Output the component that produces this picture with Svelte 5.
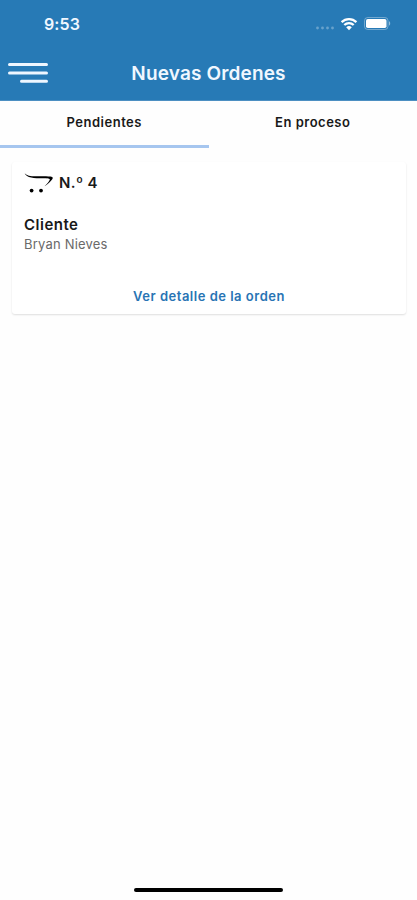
<script>
  let active = 0;

  const tabs = ['Pendientes', 'En proceso'];
  const orders = [{ number: 4, client: 'Bryan Nieves' }];
</script>

<div class="screen">
  <header>
    <div class="status">
      <span class="time">9:53</span>
      <div class="indicators">
        <svg class="signal" width="20" height="4" viewBox="0 0 20 4">
          <circle cx="2.5" cy="2" r="1.4" />
          <circle cx="7.5" cy="2" r="1.4" />
          <circle cx="12.5" cy="2" r="1.4" />
          <circle cx="17.5" cy="2" r="1.4" />
        </svg>
        <svg class="wifi" width="18" height="14" viewBox="0 0 18 14">
          <path d="M1.6 5.1a10.6 10.6 0 0 1 14.8 0" />
          <path d="M4.3 8a6.8 6.8 0 0 1 9.4 0" />
          <path class="dot" d="M9 13.2 6.2 10.3a4 4 0 0 1 5.6 0Z" />
        </svg>
        <svg class="battery" width="27" height="13" viewBox="0 0 27 13">
          <rect class="shell" x="0.5" y="0.5" width="23.5" height="12" rx="3.2" />
          <rect x="2" y="2" width="20.5" height="9" rx="1.8" />
          <path class="cap" d="M25 4.3c1.6.6 1.6 3.8 0 4.4Z" />
        </svg>
      </div>
    </div>
    <div class="bar">
      <button class="menu" aria-label="Menú">
        <svg width="40" height="22" viewBox="0 0 40 22">
          <path d="M1.500 2.500h37M1.500 10.900h37M13.500 19.200h25" />
        </svg>
      </button>
      <h1>Nuevas Ordenes</h1>
    </div>
  </header>

  <nav>
    {#each tabs as tab, i}
      <button class="tab" class:active={active === i} on:click={() => (active = i)}>
        <span>{tab}</span>
      </button>
    {/each}
  </nav>

  <main>
    {#each orders as order}
      <article>
        <div class="number">
          <svg width="30" height="22" viewBox="0 0 30 22">
            <path d="M.6.2C3 2.800 6 3.200 12 3.200c7 0 13-.3 16.200.7 1.200.7.4 2-1 3.600-1.600 1.900-4 4.200-6.700 5.800 2.500-2.300 4.800-4.900 5.300-6.500.2-1.200-1.900-1.400-6.900-1.500C10 5.100 2.600 4.900.6.2Z" />
            <circle cx="7.600" cy="17.600" r="1.900" />
            <circle cx="17" cy="17.600" r="1.900" />
          </svg>
          <span>N.º {order.number}</span>
        </div>
        <h2>Cliente</h2>
        <p>{order.client}</p>
        <button class="detail">Ver detalle de la orden</button>
      </article>
    {/each}
  </main>

  <div class="home"></div>
</div>

<style>
  :global(body) {
    background: #fff;
  }

  .screen {
    height: 900px;
    box-sizing: border-box;
    display: flex;
    flex-direction: column;
    overflow: hidden;
    background: #fefefe;
    color: #191919;
    font-family: Inter, "Liberation Sans", sans-serif;
  }

  button {
    padding: 0;
    border: 0;
    background: none;
    font: inherit;
    color: inherit;
  }

  h1,
  h2,
  p {
    margin: 0;
  }

  header {
    height: 101px;
    box-sizing: border-box;
    border-bottom: 1px solid #4c8fc2;
    background: #277ab6;
    color: #f0f7ff;
  }

  .status {
    height: 47px;
    display: flex;
    justify-content: space-between;
    padding: 0 26px 0 44px;
  }

  .time {
    margin-top: 14px;
    font-size: 16px;
    line-height: 20px;
    font-weight: 600;
    letter-spacing: 0.1px;
  }

  .indicators {
    display: flex;
    align-items: flex-start;
    padding-top: 17px;
  }

  .indicators svg {
    fill: #fff;
  }

  .signal {
    margin-top: 9px;
    margin-right: 5px;
    opacity: 0.3;
  }

  .wifi {
    margin-right: 6px;
  }

  .wifi path {
    fill: none;
    stroke: #fff;
    stroke-width: 2.3;
  }

  .wifi .dot {
    fill: #fff;
    stroke: none;
  }

  .indicators .shell {
    fill: none;
    stroke: #fff;
    opacity: 0.35;
  }

  .cap {
    opacity: 0.5;
  }

  .bar {
    height: 53px;
    display: grid;
    grid-template-columns: 48px 1fr 48px;
  }

  .menu {
    display: flex;
    justify-content: flex-end;
    padding-top: 15px;
  }

  .menu path {
    fill: none;
    stroke: #eef6ff;
    stroke-width: 3;
    stroke-linecap: round;
  }

  h1 {
    padding-top: 14px;
    text-align: center;
    font-size: 19px;
    line-height: 25px;
    font-weight: 600;
    letter-spacing: 0.15px;
    white-space: nowrap;
  }

  nav {
    height: 47px;
    display: grid;
    grid-template-columns: 1fr 1fr;
  }

  .tab {
    padding-bottom: 3px;
    font-size: 13px;
    font-weight: 600;
    letter-spacing: 0.5px;
    border-bottom: 3px solid transparent;
  }

  .tab.active {
    border-color: #a6c6ef;
  }

  main {
    flex: 1;
    padding: 14px 11px 0 12px;
  }

  article {
    height: 152px;
    display: flex;
    flex-direction: column;
    align-items: flex-start;
    box-sizing: border-box;
    padding: 11px 12px 0;
    border-radius: 3px;
    background: #fff;
    box-shadow: 0 1px 2px rgba(0, 0, 0, 0.13);
  }

  .number {
    height: 22px;
    display: flex;
    gap: 5px;
    font-size: 15px;
    line-height: 19px;
    font-weight: 600;
    letter-spacing: 0.4px;
  }

  h2 {
    margin-top: 20px;
    font-size: 15px;
    line-height: 20px;
    font-weight: 600;
    letter-spacing: 0.5px;
  }

  p {
    color: #6a6a6a;
    font-size: 13px;
    line-height: 18px;
    letter-spacing: 0.2px;
  }

  .detail {
    align-self: center;
    margin-top: 33px;
    color: #2874b4;
    font-size: 13px;
    line-height: 20px;
    font-weight: 600;
    letter-spacing: 0.5px;
  }

  .home {
    width: 149px;
    height: 4px;
    margin: 0 auto 8px;
    border-radius: 2px;
    background: #000;
  }
</style>
